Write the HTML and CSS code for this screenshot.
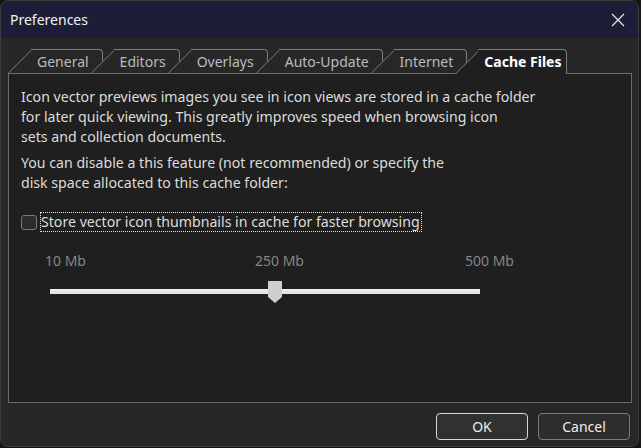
FILE: index.html
```html
<!DOCTYPE html>
<html lang="en">

<head>
    <meta charset="UTF-8">
    <title>Preferences</title>
    <link rel="stylesheet" href="styles.css">
</head>

<body>
    <div class="window">
        <div class="titlebar">
            <span class="title">Preferences</span>
            <svg class="close" width="14" height="14" viewBox="0 0 14 14">
                <path d="M1 1 L13 13 M13 1 L1 13" stroke="#e8e8e8" stroke-width="1.2" fill="none" />
            </svg>
        </div>

        <div class="body">
            <ul class="tabs">
                <li class="tab">General</li>
                <li class="tab">Editors</li>
                <li class="tab">Overlays</li>
                <li class="tab">Auto-Update</li>
                <li class="tab">Internet</li>
                <li class="tab active">Cache Files</li>
            </ul>

            <div class="panel">
                <p>Icon vector previews images you see in icon views are stored in a cache folder<br>
                    for later quick viewing. This greatly improves speed when browsing icon<br>
                    sets and collection documents.</p>
                <p>You can disable a this feature (not recommended) or specify the<br>
                    disk space allocated to this cache folder:</p>

                <label class="check">
                    <span class="box"></span>
                    <span class="check-text">Store vector icon thumbnails in cache for faster browsing</span>
                </label>

                <div class="scale">
                    <span>10 Mb</span>
                    <span>250 Mb</span>
                    <span>500 Mb</span>
                </div>
                <div class="track">
                    <svg class="thumb" width="14" height="22" viewBox="0 0 14 22">
                        <polygon points="0,0 14,0 14,16 7,22 0,16" fill="#cfcfcf" />
                    </svg>
                </div>
            </div>

            <div class="buttons">
                <button class="btn default">OK</button>
                <button class="btn">Cancel</button>
            </div>
        </div>
    </div>
</body>

</html>
```

FILE: styles.css
```css
* {
    box-sizing: border-box;
}

body {
    margin: 0;
    background-color: #161616;
    font-family: "Noto Sans", "Open Sans", sans-serif;
}

ul,
li,
p {
    margin: 0;
    padding: 0;
    list-style: none;
}

.window {
    width: 639px;
    height: 447px;
    background-color: #272727;
    border: 1px solid #3d3d3d;
    border-radius: 8px;
    overflow: hidden;
}

.titlebar {
    height: 37px;
    background-color: #1c1e37;
    display: flex;
    align-items: center;
    justify-content: space-between;
    padding: 0 13px 0 9px;
}

.title {
    color: #f2f2f2;
    font-size: 14px;
}

.body {
    padding: 11px 6px 0 7px;
}

/* tabs */
.tabs {
    display: flex;
    height: 24px;
    position: relative;
    z-index: 1;
}

.tab {
    position: relative;
    height: 24px;
    line-height: 25px;
    padding: 0 14px 0 29px;
    margin-left: -12px;
    color: #b7bcc2;
    font-size: 14px;
}

.tab:first-child {
    margin-left: 0;
}

.tab::before {
    content: "";
    position: absolute;
    left: 0;
    bottom: 0;
    width: 40px;
    height: 23px;
    background-color: #272727;
    border-left: 1px solid #7c7c7c;
    border-top: 1px solid #7c7c7c;
    transform-origin: bottom left;
    transform: skewX(-45deg);
    z-index: -1;
}

.tab::after {
    content: "";
    position: absolute;
    left: 23px;
    right: 0;
    top: 0;
    bottom: 0;
    background-color: #272727;
    border-top: 1px solid #7c7c7c;
    border-right: 1px solid #7c7c7c;
    border-top-right-radius: 4px;
    z-index: -1;
}

.tab.active {
    color: #ffffff;
    font-weight: bold;
    padding-right: 6px;
    height: 25px;
}

.tab.active::before,
.tab.active::after {
    background-color: #1f1f1f;
}

.tab.active::before {
    height: 24px;
}

/* panel */
.panel {
    height: 330px;
    border: 1px solid #6c6c6c;
    background-color: #1f1f1f;
    padding: 13px 12px 0 12px;
    color: #dcdcdc;
    font-size: 14.15px;
    line-height: 20px;
}

.panel p + p {
    margin-top: 6px;
}

.check {
    display: flex;
    align-items: center;
    margin-top: 19px;
    height: 20px;
}

.box {
    width: 16px;
    height: 15px;
    border: 1px solid #7a7a7a;
    border-radius: 3px;
    background-color: #2c2c2c;
    margin-right: 3px;
}

.check-text {
    border: 1px dotted #e0e0e0;
    line-height: 18px;
    padding: 0 1px 0 0;
}

.scale {
    display: grid;
    grid-template-columns: repeat(3, 210px);
    margin: 19px 0 0 24px;
    color: #858585;
    font-size: 14px;
}

.track {
    position: relative;
    width: 430px;
    height: 5px;
    margin: 18px 0 0 29px;
    background-color: #e6e6e6;
    border-top: 1px solid #f2f2f2;
}

.thumb {
    position: absolute;
    left: 218px;
    top: -9px;
}

/* buttons */
.buttons {
    display: flex;
    justify-content: flex-end;
    gap: 10px;
    margin: 10px 2px 0 0;
}

.btn {
    width: 92px;
    height: 27px;
    border: 1px solid #7a7a7a;
    border-radius: 4px;
    background-color: #2d2d2d;
    color: #ececec;
    font-family: "Noto Sans", "Open Sans", sans-serif;
    font-size: 14px;
    padding: 0;
}

.btn.default {
    border-color: #d8d8d8;
    background-color: #313131;
}
```
